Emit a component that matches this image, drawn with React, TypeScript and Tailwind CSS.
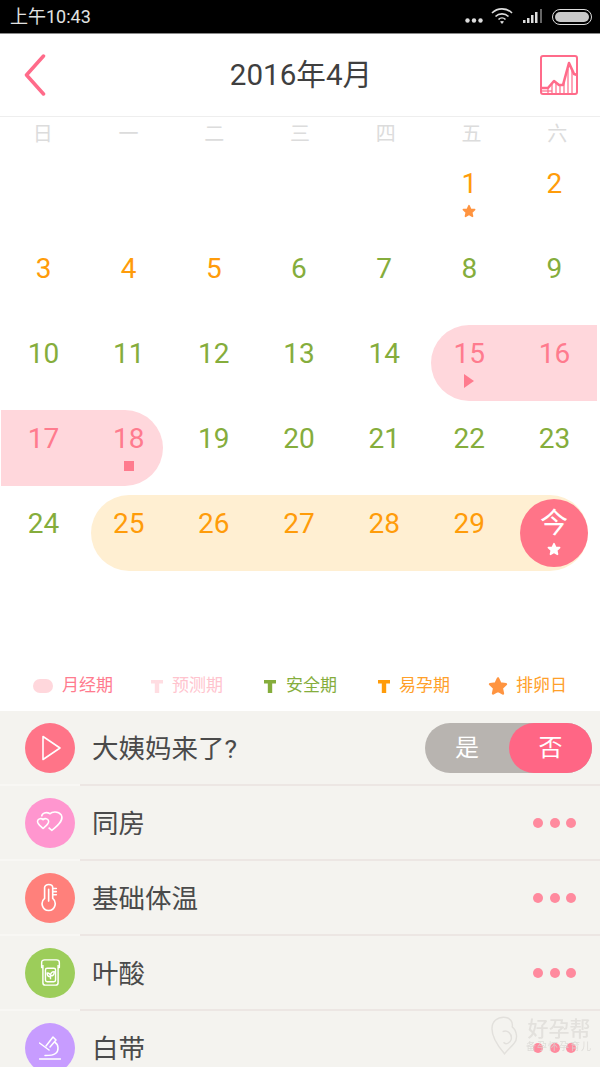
const WEEK = ['日', '一', '二', '三', '四', '五', '六'];

type Day = {
  d?: number;
  color?: string;
  range?: 'pink' | 'orange';
  cap?: 'start' | 'end';
  mark?: 'star' | 'tri' | 'square';
  today?: boolean;
};

const green = 'text-[#85ad3c]';
const orange = 'text-[#ff9c0a]';
const pink = 'text-[#ff7b8e]';

const g = (d: number): Day => ({ d, color: green });
const o = (d: number): Day => ({ d, color: orange });

const WEEKS: Day[][] = [
  [{}, {}, {}, {}, {}, { d: 1, color: orange, mark: 'star' }, o(2)],
  [o(3), o(4), o(5), g(6), g(7), g(8), g(9)],
  [
    g(10), g(11), g(12), g(13), g(14),
    { d: 15, color: pink, range: 'pink', cap: 'start', mark: 'tri' },
    { d: 16, color: pink, range: 'pink' },
  ],
  [
    { d: 17, color: pink, range: 'pink' },
    { d: 18, color: pink, range: 'pink', cap: 'end', mark: 'square' },
    g(19), g(20), g(21), g(22), g(23),
  ],
  [
    g(24),
    { d: 25, color: orange, range: 'orange', cap: 'start' },
    { d: 26, color: orange, range: 'orange' },
    { d: 27, color: orange, range: 'orange' },
    { d: 28, color: orange, range: 'orange' },
    { d: 29, color: orange, range: 'orange' },
    { range: 'orange', cap: 'end', today: true },
  ],
];

const Star = ({ size, color }: { size: number; color: string }) => (
  <svg width={size} height={size} viewBox="0 0 24 24">
    <polygon
      points="12,3 14.8,9 21.5,9.8 16.5,14.4 17.9,21 12,17.7 6.1,21 7.5,14.4 2.5,9.8 9.2,9"
      fill={color}
      stroke={color}
      strokeWidth="3"
      strokeLinejoin="round"
    />
  </svg>
);

const Cell = ({ day }: { day: Day }) => {
  const bg = day.range === 'pink' ? 'bg-[#ffd7dc]' : day.range === 'orange' ? 'bg-[#ffefd2]' : '';
  const cap =
    day.cap === 'start' && day.range === 'orange'
      ? 'ml-[5px] pr-[5px] rounded-l-[38px]'
      : day.cap === 'start'
        ? 'ml-[4px] pr-[4px] rounded-l-[38px]'
        : day.cap === 'end' && day.today
          ? 'mr-[9px] rounded-r-[38px]'
          : day.cap === 'end'
            ? 'mr-[8px] pl-[8px] rounded-r-[38px]'
            : '';
  return (
    <div className="h-[85px]">
      <div className={`h-[76px] flex flex-col items-center ${bg} ${cap}`}>
        {day.today ? (
          <div className="w-full h-full flex items-center justify-end">
            <div className="w-[68px] h-[68px] rounded-full bg-[#ff7488] flex flex-col items-center text-white">
              <span className="text-[28px] leading-[36px] mt-[7px]">今</span>
              <Star size={14} color="#ffffff" />
            </div>
          </div>
        ) : (
          <>
            <span className={`text-[28px] leading-[36px] mt-[11px] ${day.color ?? ''}`}>{day.d}</span>
            <div className="h-[18px] flex items-center">
              {day.mark === 'star' && <Star size={14} color="#ff9440" />}
              {day.mark === 'tri' && (
                <svg width="10" height="14" viewBox="0 0 10 14">
                  <polygon points="0,0 10,7 0,14" fill="#ff7b8e" />
                </svg>
              )}
              {day.mark === 'square' && <div className="w-[10px] h-[10px] bg-[#ff7b8e]" />}
            </div>
          </>
        )}
      </div>
    </div>
  );
};

const TMark = ({ color }: { color: string }) => (
  <svg width="12" height="13" viewBox="0 0 12 13">
    <rect x="0" y="0" width="12" height="3.5" fill={color} />
    <rect x="3.8" y="0" width="4.4" height="13" fill={color} />
  </svg>
);

const Legend = () => (
  <div className="h-[30px] mt-[91px] mb-[10px] flex items-center pl-[33px] text-[17px]">
    <div className="w-[20px] h-[14px] rounded-[7px] bg-[#ffd7dc]" />
    <span className="ml-[9px] text-[#ff7b8e]">月经期</span>
    <div className="ml-[38px]"><TMark color="#ffdde2" /></div>
    <span className="ml-[9px] text-[#ffc4ce]">预测期</span>
    <div className="ml-[41px]"><TMark color="#85ad3c" /></div>
    <span className="ml-[10px] text-[#85ad3c]">安全期</span>
    <div className="ml-[41px]"><TMark color="#ff9c0a" /></div>
    <span className="ml-[9px] text-[#ffa02a]">易孕期</span>
    <div className="ml-[38px]"><Star size={20} color="#ff9440" /></div>
    <span className="ml-[8px] text-[#ffa02a]">排卵日</span>
  </div>
);

const PlayIcon = () => (
  <svg width="26" height="26" viewBox="0 0 26 26" fill="none" stroke="#fff" strokeWidth="1.6" strokeLinejoin="round">
    <path d="M6 1.5 L23 13 L6 24.5 Z" />
  </svg>
);

const HeartIcon = () => (
  <svg width="28" height="24" viewBox="0 0 30 26" fill="none" stroke="#fff" strokeWidth="1.7" strokeLinejoin="round">
    <path d="M6 6 C6 2 11 0.5 15 3 C17 0.5 24 0 27 4 C30 9 26 14 17 21 L13.5 18" />
    <path d="M7.5 9.5 C6 7.5 2 8 1.5 11 C1 14 5 16.5 7.5 19 C10 16.5 14 14 13.5 11 C13 8 9 7.5 7.5 9.5 Z" />
  </svg>
);

const ThermoIcon = () => (
  <svg width="18" height="29" viewBox="0 0 20 32" fill="none" stroke="#fff" strokeWidth="1.8" strokeLinecap="round">
    <path d="M4 17 V5 C4 0.5 13 0.5 13 5 V17 C18 21 16 30.5 8.5 30.5 C1 30.5 -1 21 4 17 Z" />
    <path d="M8.5 7 V20" />
    <path d="M13 6 H17 M13 9.5 H17 M13 13 H17" />
  </svg>
);

const LeafIcon = () => (
  <svg width="23" height="27" viewBox="0 0 24 32" fill="none" stroke="#fff" strokeWidth="1.7" strokeLinejoin="round">
    <path d="M3 10 H1.5 V4 C1.5 2 3 1 5 1 H19 C21 1 22.5 2 22.5 4 V10 H21" />
    <path d="M3 7 V28 C3 30 4 31 6 31 H18 C20 31 21 30 21 28 V7" />
    <rect x="6" y="11" width="12" height="16" rx="2" />
    <path d="M12 24 V19 M12 21 C8.5 21 8 18.5 8 16.5 C10.5 16.5 12 18 12 21 Z M12 20 C12 16.5 14 15 16.5 15 C16.5 18 15 20 12 20 Z" />
  </svg>
);

const ScopeIcon = () => (
  <svg width="22" height="24" viewBox="0 0 22 24" fill="none" stroke="#fff" strokeWidth="1.5" strokeLinecap="round" strokeLinejoin="round">
    <path d="M0.5 7 L10 14" />
    <path d="M7 10 L14 1 L17 4 L11 11" />
    <path d="M15.5 6 C20 8.5 20 15 16.5 17.5 C14 19.5 10 19.5 6 19.5" />
    <path d="M0.5 23 H21.5" />
  </svg>
);

const Dots = () => (
  <div className="flex gap-[6.5px] mr-[24px]">
    <div className="w-[10px] h-[10px] rounded-full bg-[#ff8a9e]" />
    <div className="w-[10px] h-[10px] rounded-full bg-[#ff8a9e]" />
    <div className="w-[10px] h-[10px] rounded-full bg-[#ff8a9e]" />
  </div>
);

const Row = ({
  circle,
  icon,
  label,
  children,
  last,
}: {
  circle: string;
  icon: React.ReactNode;
  label: string;
  children: React.ReactNode;
  last?: boolean;
}) => (
  <div className="h-[75px] flex flex-col">
    <div className="h-[73px] flex items-center pl-[25px]">
      <div className={`w-[50px] h-[50px] rounded-full flex items-center justify-center ${circle}`}>{icon}</div>
      <span className="ml-[17px] mt-[2px] text-[26.5px] text-[#4a4a4a]">{label}</span>
      <div className="ml-auto flex items-center">{children}</div>
    </div>
    {!last && (
      <div className="h-[2px] flex">
        <div className="w-[80px] bg-[#f8f7f4]" />
        <div className="flex-1 bg-[#ece6e3]" />
      </div>
    )}
  </div>
);

export default function App() {
  return (
    <div
      className="relative w-[600px] h-[1067px] overflow-hidden bg-white"
      style={{ fontFamily: 'Roboto, "Noto Sans CJK SC", sans-serif' }}
    >
      {/* status bar */}
      <div className="h-[34px] bg-black border-b border-[#8a8a8a] flex items-center pl-[10px] pr-[8px] text-[#e2e2e2]">
        <span className="text-[18px]">上午10:43</span>
        <div className="ml-auto flex items-center">
          <svg width="18" height="5" viewBox="0 0 18 5" className="mt-[8px]">
            <circle cx="2.5" cy="2.5" r="2.2" fill="#ddd" />
            <circle cx="9" cy="2.5" r="2.2" fill="#ddd" />
            <circle cx="15.5" cy="2.5" r="2.2" fill="#ddd" />
          </svg>
          <svg width="22" height="18" viewBox="0 0 22 18" fill="none" stroke="#ddd" strokeWidth="1.6" className="ml-[8px] mb-[2px]">
            <path d="M1 6 C6.5 0.5 15.5 0.5 21 6" />
            <path d="M4.5 9.5 C8 6 14 6 17.5 9.5" />
            <path d="M7.5 12.5 C9.5 10.5 12.5 10.5 14.5 12.5" />
            <path d="M11 17 L9 14.5 C10 13.7 12 13.7 13 14.5 Z" fill="#ddd" stroke="none" />
          </svg>
          <svg width="20" height="15" viewBox="0 0 20 15" className="ml-[10px]">
            <rect x="0" y="11" width="2.5" height="3" fill="#ddd" />
            <rect x="4" y="9" width="2.5" height="5" fill="#ddd" />
            <rect x="8" y="6" width="2.5" height="8" fill="#ddd" />
            <rect x="12" y="3" width="2.5" height="11" fill="#ddd" />
            <rect x="17" y="0" width="2" height="14" fill="#666" />
          </svg>
          <div className="ml-[9px] w-[40px] h-[16px] rounded-[8px] border border-[#ddd] p-[2px]">
            <div className="w-full h-full rounded-[5px] bg-[#c8c8c8]" />
          </div>
        </div>
      </div>

      {/* header */}
      <div className="h-[83px] border-b border-[#eeeeee] flex items-center justify-between pl-[24px] pr-[22px]">
        <div className="w-[38px]">
          <svg width="22" height="42" viewBox="0 0 22 42" fill="none" stroke="#ff6b8a" strokeWidth="3.5" strokeLinecap="round" strokeLinejoin="round">
            <path d="M19.5 2 L2.5 21 L19.5 40" />
          </svg>
        </div>
        <span className="text-[29.6px] text-[#3f3f3f]">2016年4月</span>
        <svg width="38" height="40" viewBox="0 0 38 40" fill="none" stroke="#ff6b8a" strokeWidth="1.5">
          <rect x="1" y="1" width="36" height="38" rx="2" strokeWidth="2" />
          <path d="M1 33 H8 L14 26 L19 30 H23 L29 8 L34 19 L37 20" strokeWidth="2.6" strokeLinejoin="round" />
          <path d="M8 32 V38 M12 28 V38 M16 28 V38 M20 30 V38 M24 28 V38 M28 14 V38 M32 16 V38" strokeWidth="1.2" />
          <path d="M1 36 H12" strokeWidth="1.2" />
        </svg>
      </div>

      {/* weekdays */}
      <div className="h-[38px] grid grid-cols-7">
        {WEEK.map((w) => (
          <div key={w} className="text-center text-[20px] leading-[34px] text-[#dcdcdc]">
            {w}
          </div>
        ))}
      </div>

      {/* month */}
      <div className="grid grid-cols-7 pl-[1px] pr-[3px]">
        {WEEKS.flat().map((day, i) => (
          <Cell key={i} day={day} />
        ))}
      </div>

      <Legend />

      {/* records */}
      <div className="bg-[#f4f3ef] h-[356px]">
        <Row circle="bg-[#ff7488]" icon={<PlayIcon />} label="大姨妈来了?">
          <div className="mr-[8px] w-[167px] h-[50px] rounded-[25px] bg-[#b8b4b0] flex items-center text-[24px] text-white">
            <span className="w-[84px] text-center">是</span>
            <div className="w-[83px] h-[50px] rounded-[25px] bg-[#ff6685] flex items-center justify-center">否</div>
          </div>
        </Row>
        <Row circle="bg-[#ff96cf]" icon={<HeartIcon />} label="同房">
          <Dots />
        </Row>
        <Row circle="bg-[#ff807b]" icon={<ThermoIcon />} label="基础体温">
          <Dots />
        </Row>
        <Row circle="bg-[#9ccd5a]" icon={<LeafIcon />} label="叶酸">
          <Dots />
        </Row>
        <Row circle="bg-[#c79cff]" icon={<ScopeIcon />} label="白带" last>
          <Dots />
        </Row>
      </div>

      {/* watermark */}
      <div className="absolute left-[491px] top-[1016px] flex items-start gap-[8px] opacity-80 blur-[0.5px]">
        <svg width="27" height="39" viewBox="0 0 28 40" fill="none" stroke="#dedcd8" strokeWidth="1.5">
          <path d="M14 39 C8 32 1 22 1 13 C1 5 7 1 13 1 C20 1 23 6 22 11 C27 15 28 24 24 28 C21 32 17 35 14 39 Z" />
          <path d="M12 16 C17 14 22 18 21 24 C20 28 15 30 13 27" />
        </svg>
        <div className="flex flex-col items-center">
          <span className="text-[21px] leading-[26px] font-medium text-[#dfddd9]">好孕帮</span>
          <span className="text-[10px] leading-[10px] tracking-[1px] text-[#d8d6d2]">备孕怀孕育儿</span>
        </div>
      </div>
    </div>
  );
}
